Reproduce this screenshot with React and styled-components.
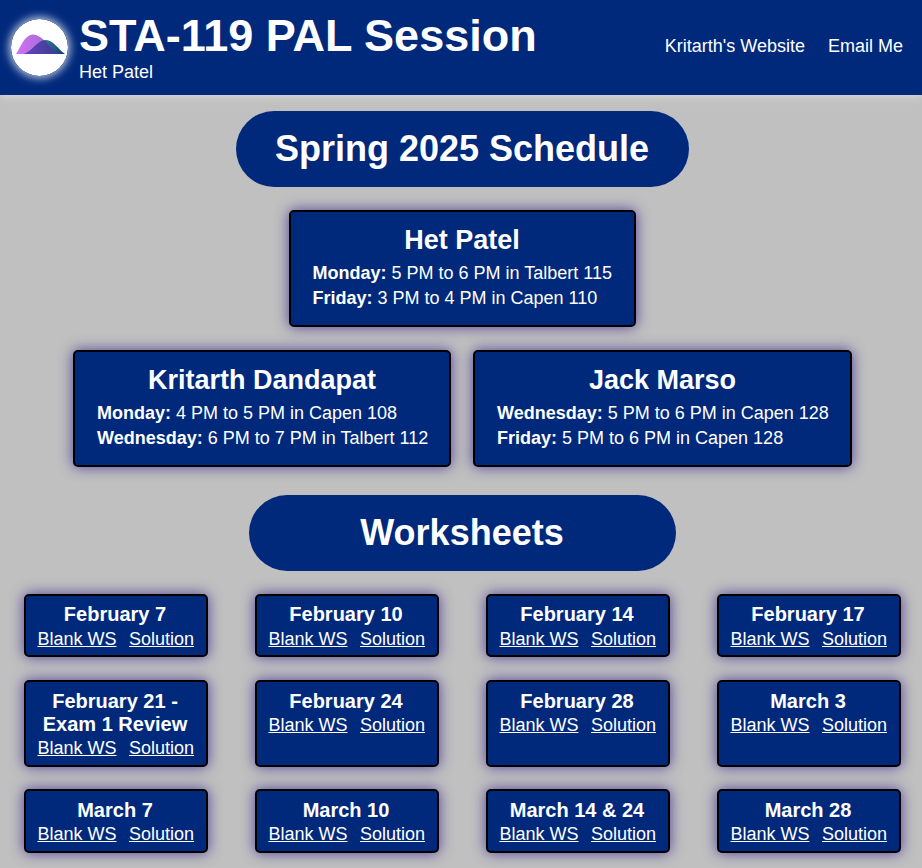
import React from "react";
import styled, { createGlobalStyle } from "styled-components";

const Global = createGlobalStyle`
  html, body { margin: 0; padding: 0; background: #c0c0c0; }
  body { font-family: "Liberation Sans", Arial, sans-serif; color: #fff; overflow: hidden; height: 868px; }
`;
const navy = "#00297c";
const halo = "0 0 14px rgba(50,30,140,.8)";

const Header = styled.header`
  height: 95px; background: ${navy}; display: flex; align-items: flex-start; justify-content: space-between;
  box-shadow: 0 0 10px rgba(255,255,255,.55); position: relative;
`;
const Brand = styled.div`display: flex; align-items: flex-start; padding-left: 11px;`;
const Logo = styled.svg`
  width: 57px; height: 57px; margin-top: 19px; margin-right: 11px; border-radius: 50%;
  box-shadow: 0 0 8px 2px rgba(255,255,255,.75); display: block;
`;
const Titles = styled.div`display: flex; flex-direction: column; padding-top: 10px;`;
const Title = styled.h1`margin: 0; font-size: 45px; line-height: 52px; font-weight: 700;`;
const Subtitle = styled.div`font-size: 18px; line-height: 20px;`;
const Nav = styled.nav`display: flex; gap: 23px; padding: 36px 19px 0 0;`;
const NavLink = styled.a`font-size: 18px; line-height: 20px; color: #fff;`;

const Main = styled.main`display: flex; flex-direction: column; align-items: center; padding-left: 2px;`;
const Pill = styled.h2`
  margin: ${p => p.$mt}px 0 0; height: 76px; border-radius: 38px; background: ${navy};
  font-size: 36px; line-height: 76px; font-weight: 700; width: ${p => p.$w}px; text-align: center;
`;
const Person = styled.section`
  box-sizing: border-box; width: ${p => p.$w}px; height: 117px; background: ${navy}; border: 2px solid #000; border-radius: 5px;
  box-shadow: ${halo}; padding: 12px 22px 0;
`;
const PersonName = styled.h3`margin: 0 0 5px; font-size: 27px; line-height: 32px; font-weight: 700; text-align: center;`;
const Slot = styled.div`font-size: 18px; line-height: 25px; white-space: nowrap;`;
const Duo = styled.div`display: flex; gap: 22px; margin-top: 23px; margin-left: 1px;`;
const Solo = styled.div`margin-top: 23px;`;

const Grid = styled.div`
  display: grid; grid-template-columns: repeat(4, 184px); column-gap: 47px; row-gap: 22.62px; margin-top: 23px; margin-left: 1px;
`;
const Sheet = styled.article`
  box-sizing: border-box; background: ${navy}; border: 2px solid #000; border-radius: 5px; padding: 7.45px 0 4.58px;
  box-shadow: ${halo}; text-align: center;
`;
const SheetTitle = styled.h4`margin: 0; padding-right: 2px; font-size: 20px; line-height: 23px; font-weight: 700;`;
const Links = styled.div`display: flex; justify-content: center; gap: 12.5px; margin-top: 0.45px; padding-right: 0.5px; font-size: 18px; line-height: 24px;`;
const SheetLink = styled.a`color: #fff; text-decoration: underline;`;

const sheets = [
  ["February 7"], ["February 10"], ["February 14"], ["February 17"],
  ["February 21 -", "Exam 1 Review"], ["February 24"], ["February 28"], ["March 3"],
  ["March 7"], ["March 10"], ["March 14 & 24"], ["March 28"],
];

export default function App() {
  return (
    <>
      <Global />
      <Header>
        <Brand>
          <Logo viewBox="0 0 57 57">
            <defs>
              <linearGradient id="a" x1="0" x2="1"><stop offset="0" stopColor="#d46ff4" /><stop offset="1" stopColor="#8f6cc8" /></linearGradient>
              <linearGradient id="b" x1="0" x2="1"><stop offset="0" stopColor="#3a5aa0" /><stop offset=".6" stopColor="#2f6a96" /><stop offset="1" stopColor="#123a6e" /></linearGradient>
              <linearGradient id="c" x1="0" x2="1"><stop offset="0" stopColor="#6a3fc0" /><stop offset="1" stopColor="#2c3f86" /></linearGradient>
              <clipPath id="p"><path d="M5 35C9 30 13 16 22 15.5C30 15.5 36 25 47 35Z" /></clipPath>
            </defs>
            <circle cx="28.5" cy="28.5" r="28.5" fill="#fff" />
            <path d="M5 35C9 30 13 16 22 15.5C30 15.5 36 25 47 35Z" fill="url(#a)" />
            <path d="M13 35C21 33 26 21 35 21C42 21 47 30 54 35Z" fill="url(#b)" />
            <path d="M13 35C21 33 26 21 35 21C42 21 47 30 54 35Z" fill="url(#c)" clipPath="url(#p)" />
          </Logo>
          <Titles>
            <Title>STA-119 PAL Session</Title>
            <Subtitle>Het Patel</Subtitle>
          </Titles>
        </Brand>
        <Nav>
          <NavLink>Kritarth's Website</NavLink>
          <NavLink>Email Me</NavLink>
        </Nav>
      </Header>
      <Main>
        <Pill $mt={16} $w={453}>Spring 2025 Schedule</Pill>
        <Solo>
          <Person $w={347}>
            <PersonName>Het Patel</PersonName>
            <Slot><b>Monday:</b> 5 PM to 6 PM in Talbert 115</Slot>
            <Slot><b>Friday:</b> 3 PM to 4 PM in Capen 110</Slot>
          </Person>
        </Solo>
        <Duo>
          <Person $w={378}>
            <PersonName>Kritarth Dandapat</PersonName>
            <Slot><b>Monday:</b> 4 PM to 5 PM in Capen 108</Slot>
            <Slot><b>Wednesday:</b> 6 PM to 7 PM in Talbert 112</Slot>
          </Person>
          <Person $w={379}>
            <PersonName>Jack Marso</PersonName>
            <Slot><b>Wednesday:</b> 5 PM to 6 PM in Capen 128</Slot>
            <Slot><b>Friday:</b> 5 PM to 6 PM in Capen 128</Slot>
          </Person>
        </Duo>
        <Pill $mt={28} $w={427}>Worksheets</Pill>
        <Grid>
          {sheets.map(lines => (
            <Sheet key={lines[0]}>
              <SheetTitle>{lines.map(l => <div key={l}>{l}</div>)}</SheetTitle>
              <Links><SheetLink>Blank WS</SheetLink><SheetLink>Solution</SheetLink></Links>
            </Sheet>
          ))}
        </Grid>
      </Main>
    </>
  );
}
